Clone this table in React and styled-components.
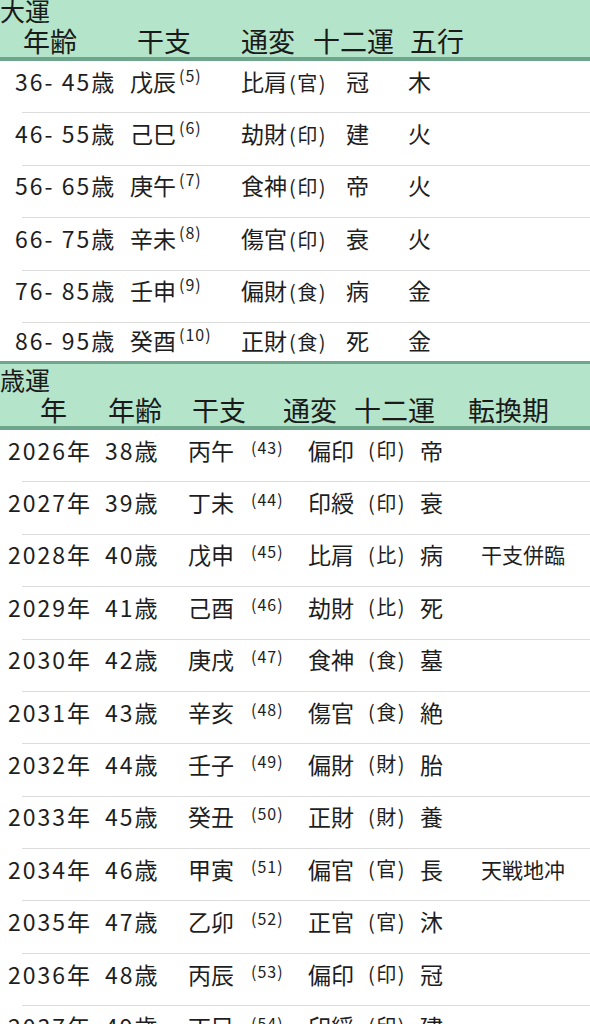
import React from "react";
import styled, { createGlobalStyle } from "styled-components";

const GlobalStyle = createGlobalStyle`
  html, body {
    margin: 0;
    padding: 0;
    background: #fff;
  }
  body {
    font-family: "Noto Sans CJK JP", "Noto Sans", sans-serif;
    color: #1e1e1e;
    overflow: hidden;
  }
`;

const Page = styled.div`
  width: 590px;
  margin-top: -8px;
`;

const SectionHeader = styled.div`
  background: #b4e4c9;
  border-top: 3px solid #6ea68b;
  border-bottom: 4px solid #6ea68b;
  height: 62px;
  box-sizing: content-box;
`;

const SectionTitle = styled.div`
  font-size: 25px;
  line-height: 30px;
  height: 30px;
  color: #1a1a1a;
`;

const LabelRow = styled.div`
  display: grid;
  grid-template-columns: ${(p) => p.$cols};
  padding-left: ${(p) => p.$pad}px;
  font-size: 27px;
  line-height: 32px;
  height: 32px;
  color: #1a1a1a;
  white-space: nowrap;
`;

const Row = styled.div`
  position: relative;
  display: grid;
  grid-template-columns: ${(p) => p.$cols};
  padding-left: ${(p) => p.$pad}px;
  height: ${(p) => (p.$short ? 38 : 52.4)}px;
  box-sizing: border-box;
  padding-bottom: ${(p) => (p.$short ? 6 : 13)}px;
  align-items: center;
  font-size: 23px;
  white-space: nowrap;

  &::after {
    content: "";
    display: ${(p) => (p.$short ? "none" : "block")};
    position: absolute;
    left: 22px;
    right: 0;
    bottom: 0;
    height: 1px;
    background: #dcdcdc;
  }
`;

const Cell = styled.span`
  display: flex;
  align-items: baseline;
`;

const Num = styled.span`
  letter-spacing: 2px;
`;

const Sup = styled.span`
  font-size: 16px;
  position: relative;
  top: ${(p) => (p.$high ? -9 : -3)}px;
  margin-left: 3px;
  letter-spacing: 1px;
`;

const Kind = styled.span`
  font-size: 20px;
  letter-spacing: 1.5px;
  margin-left: ${(p) => p.$gap || 0}px;
`;

const Note = styled.span`
  font-size: 21px;
`;

const daiunCols = "115px 111px 105px 62px 1fr";
const daiunHeadCols = "114px 104px 72px 97px 1fr";
const saiunCols = "97px 83px 60px 60px 60px 52px 61px 1fr";
const saiunHeadCols = "68px 84px 91px 71px 114px 1fr";

const daiun = [
  ["36- 45", "戊辰", "5", "比肩", "官", "冠", "木"],
  ["46- 55", "己巳", "6", "劫財", "印", "建", "火"],
  ["56- 65", "庚午", "7", "食神", "印", "帝", "火"],
  ["66- 75", "辛未", "8", "傷官", "印", "衰", "火"],
  ["76- 85", "壬申", "9", "偏財", "食", "病", "金"],
  ["86- 95", "癸酉", "10", "正財", "食", "死", "金"],
];

const saiun = [
  [2026, 38, "丙午", 43, "偏印", "印", "帝", ""],
  [2027, 39, "丁未", 44, "印綬", "印", "衰", ""],
  [2028, 40, "戊申", 45, "比肩", "比", "病", "干支併臨"],
  [2029, 41, "己酉", 46, "劫財", "比", "死", ""],
  [2030, 42, "庚戌", 47, "食神", "食", "墓", ""],
  [2031, 43, "辛亥", 48, "傷官", "食", "絶", ""],
  [2032, 44, "壬子", 49, "偏財", "財", "胎", ""],
  [2033, 45, "癸丑", 50, "正財", "財", "養", ""],
  [2034, 46, "甲寅", 51, "偏官", "官", "長", "天戦地冲"],
  [2035, 47, "乙卯", 52, "正官", "官", "沐", ""],
  [2036, 48, "丙辰", 53, "偏印", "印", "冠", ""],
  [2037, 49, "丁巳", 54, "印綬", "印", "建", ""],
];

export default function App() {
  return (
    <Page>
      <GlobalStyle />
      <section>
        <SectionHeader>
          <SectionTitle>大運</SectionTitle>
          <LabelRow $cols={daiunHeadCols} $pad={23}>
            <span>年齢</span>
            <span>干支</span>
            <span>通変</span>
            <span>十二運</span>
            <span>五行</span>
          </LabelRow>
        </SectionHeader>
        {daiun.map((r, i) => (
          <Row key={r[0]} $cols={daiunCols} $pad={15} $short={i === daiun.length - 1}>
            <Cell>
              <Num>{r[0]}</Num>歳
            </Cell>
            <Cell>
              {r[1]}
              <Sup $high>({r[2]})</Sup>
            </Cell>
            <Cell>
              {r[3]}
              <Kind $gap={2}>({r[4]})</Kind>
            </Cell>
            <Cell>{r[5]}</Cell>
            <Cell>{r[6]}</Cell>
          </Row>
        ))}
      </section>
      <section>
        <SectionHeader>
          <SectionTitle>歳運</SectionTitle>
          <LabelRow $cols={saiunHeadCols} $pad={40}>
            <span>年</span>
            <span>年齢</span>
            <span>干支</span>
            <span>通変</span>
            <span>十二運</span>
            <span>転換期</span>
          </LabelRow>
        </SectionHeader>
        {saiun.map((r) => (
          <Row key={r[0]} $cols={saiunCols} $pad={8}>
            <Cell>
              <Num>{r[0]}</Num>年
            </Cell>
            <Cell>
              <Num>{r[1]}</Num>歳
            </Cell>
            <Cell>{r[2]}</Cell>
            <Cell>
              <Sup>({r[3]})</Sup>
            </Cell>
            <Cell>{r[4]}</Cell>
            <Cell>
              <Kind>({r[5]})</Kind>
            </Cell>
            <Cell>{r[6]}</Cell>
            <Cell>
              <Note>{r[7]}</Note>
            </Cell>
          </Row>
        ))}
      </section>
    </Page>
  );
}
